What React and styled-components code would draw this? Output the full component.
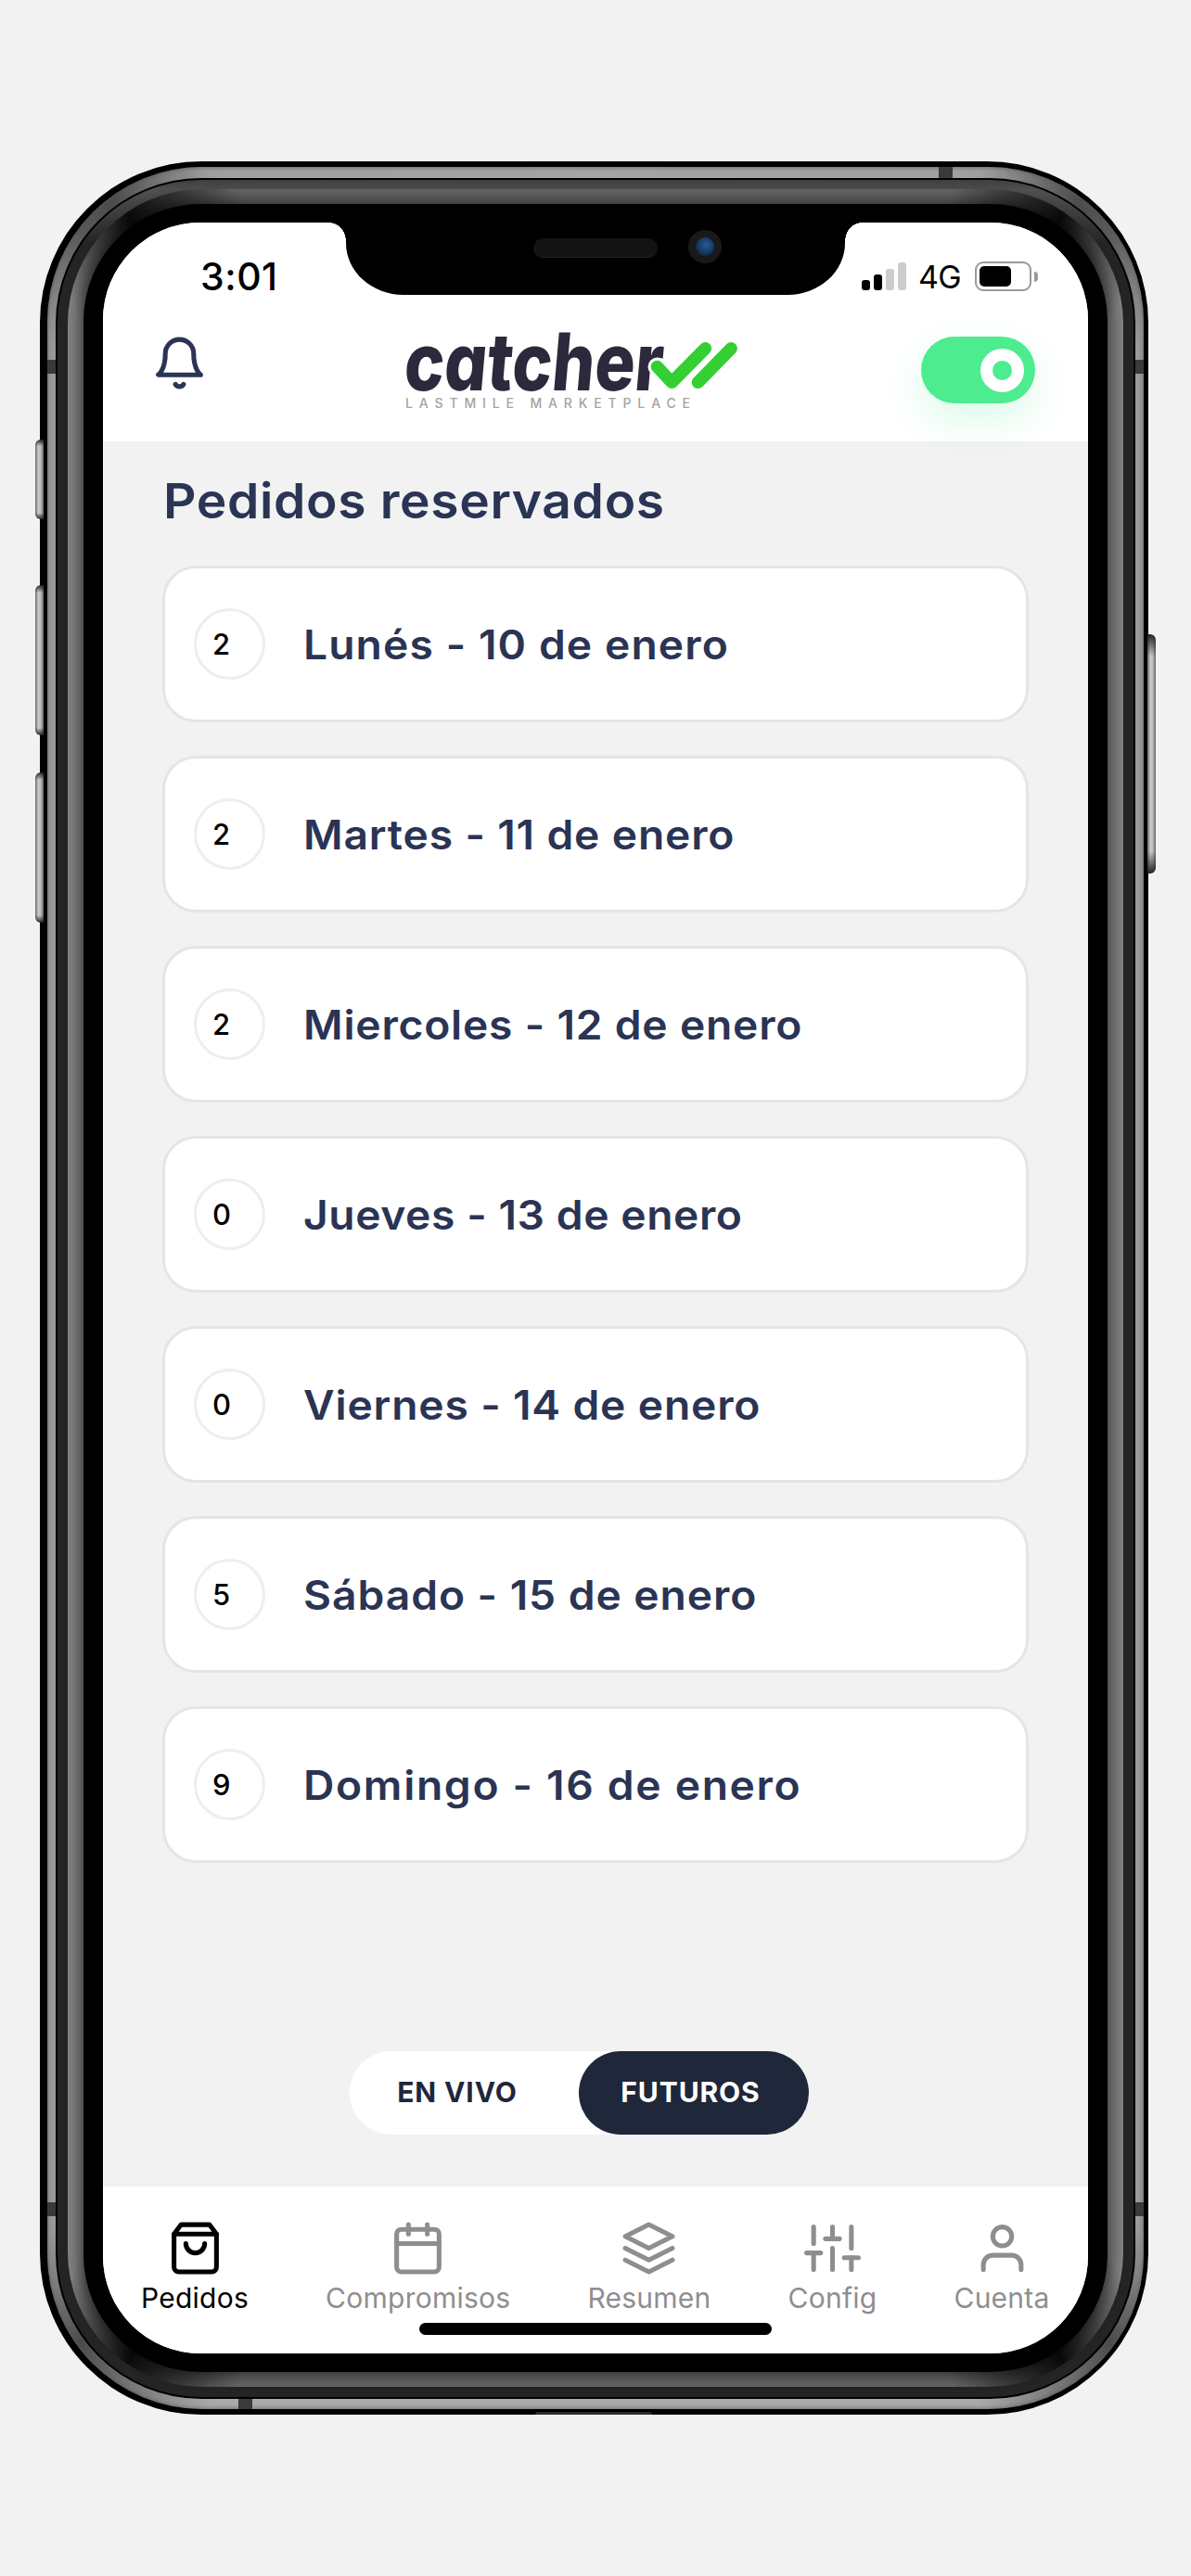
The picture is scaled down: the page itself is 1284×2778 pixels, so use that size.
import React from 'react';

import styled, { createGlobalStyle } from 'styled-components';
import { FiBell, FiCalendar, FiLayers, FiShoppingBag, FiSliders, FiUser } from 'react-icons/fi';

const GlobalStyle = createGlobalStyle`
    * {
        box-sizing: border-box;
    }
    body {
        margin: 0;
        background: #f2f2f2;
        font-family: Inter, 'Liberation Sans', sans-serif;
    }
`

const Page = styled.div`
    width: 1284px;
    height: 2778px;
    padding: 174px 46px 174px 43px;
    background: #f2f2f2;
`

/* phone chassis, from the outside in */
const Chassis = styled.div`
    position: relative;
    height: 2430px;
    padding: 6px 5px 6px 8px;
    border-radius: 174px;
    background: #000;
`
const MetalRing = styled.div`
    height: 100%;
    padding: 11.5px 9px;
    border-radius: 167px;
    background: conic-gradient(#a5a4a6 0deg, #a09fa1 19deg, #4e4b4d 24deg, #5b595b 26deg, #9c9a9d 30deg, #9c9a9d 150deg, #4e4b4d 154deg, #777577 157deg, #aaa8ab 161deg, #aaa8ab 199deg, #777577 203deg, #4e4b4d 206deg, #9c9a9d 210deg, #9c9a9d 330deg, #5b595b 334deg, #4e4b4d 336deg, #a09fa1 341deg, #a5a4a6 360deg);
    box-shadow: inset 0 0 5px #555;
`
const Seam = styled.div`
    height: 100%;
    padding: 2px;
    border-radius: 157px;
    background: #000;
`
const DarkRing = styled.div`
    height: 100%;
    padding: 10.5px 11px;
    border-radius: 155px;
    background: linear-gradient(#404040 0, #515151 11px, #252525 70px, #252525 100%);
`
const GreyRing = styled.div`
    height: 100%;
    padding: 16px 17px;
    border-radius: 145px;
    background: conic-gradient(#6a6a6a 0deg, #6a6a6a 18deg, #0c0c0c 23.5deg, #868686 28deg, #868686 152deg, #0c0c0c 156.5deg, #6a6a6a 162deg, #6a6a6a 198deg, #0c0c0c 203.5deg, #868686 208deg, #868686 332deg, #0c0c0c 336.5deg, #6a6a6a 342deg, #6a6a6a 360deg);
`
const Bezel = styled.div`
    height: 100%;
    padding: 20px 21px;
    border-radius: 126px;
    background: #000;
    box-shadow: 0 0 22px rgba(0, 0, 0, .8);
`
const SideButton = styled.span`
    position: absolute;
    top: ${props => props.top}px;
    ${props => props.side}: ${props => props.side === 'left' ? -5 : -7.5}px;
    width: 9px;
    height: ${props => props.length}px;
    border-radius: ${props => props.side === 'left' ? '6px 0 0 6px' : '0 6px 6px 0'};
    background:
        linear-gradient(#222, transparent ${props => props.fade}px, transparent calc(100% - ${props => props.fade}px), #222),
        linear-gradient(to right, #666, #ccc 35%, #bbb 65%, #666);
`
const Antenna = styled.span`
    position: absolute;
    top: ${props => props.top}px;
    left: ${props => props.left}px;
    width: ${props => props.flat ? 15 : 9}px;
    height: ${props => props.flat ? 11.5 : 15}px;
    background: #3a3a3a;
`
const Port = styled.span`
    position: absolute;
    bottom: 0;
    left: 534px;
    width: 126px;
    height: 3px;
    border-radius: 6px 6px 0 0;
    background: #2c2c2c;
`

const Screen = styled.div`
    position: relative;
    display: flex;
    flex-direction: column;
    height: 100%;
    border-radius: 105px;
    overflow: hidden;
    background: #f2f2f2;
`

const Notch = styled.div`
    position: absolute;
    top: 0;
    left: 262px;
    width: 538px;
    height: 78px;
    border-radius: 0 0 62px 62px / 0 0 56px 56px;
    background: #000;
    &::before, &::after {
        content: '';
        position: absolute;
        top: 0;
        width: 18px;
        height: 20px;
    }
    &::before {
        right: 100%;
        background: radial-gradient(ellipse 18px 20px at 0 100%, transparent 98%, #000 100%);
    }
    &::after {
        left: 100%;
        background: radial-gradient(ellipse 18px 20px at 100% 100%, transparent 98%, #000 100%);
    }
`
const Speaker = styled.span`
    position: absolute;
    top: 17px;
    left: 202px;
    width: 134px;
    height: 21px;
    border-radius: 11px;
    background: #131313;
    border-bottom: 1px solid #222;
`
const Camera = styled.span`
    position: absolute;
    top: 8px;
    left: 369px;
    width: 36px;
    height: 36px;
    border-radius: 50%;
    border: 8px solid #191919;
    background: radial-gradient(circle at 55% 40%, #28599a, #153a66 50%, #0a1626);
`

const Header = styled.header`
    position: relative;
    height: 236px;
    background: #fff;
`
const StatusBar = styled.div`
    display: flex;
    align-items: center;
    height: 116px;
    padding: 0 54px 0 105px;
`
const Time = styled.span`
    margin-right: auto;
    font-size: 41px;
    font-weight: 500;
    letter-spacing: .5px;
`
const Signal = styled.div`
    display: flex;
    align-items: flex-end;
    gap: 4px;
    height: 30px;
`
const SignalBar = styled.span`
    width: 9px;
    height: ${props => props.size}px;
    border-radius: 3px;
    background: ${props => props.on ? '#000' : '#ccc'};
`
const Network = styled.span`
    margin: 0 15px 0 13px;
    font-size: 34px;
    letter-spacing: -.7px;
`
const Battery = styled.span`
    width: 61px;
    height: 32px;
    padding: 3px;
    border: 2px solid #999;
    border-radius: 9px;
`
const BatteryLevel = styled.span`
    display: block;
    width: 34px;
    height: 22px;
    border-radius: 5px;
    background: #000;
`
const BatteryTip = styled.span`
    width: 4px;
    height: 11px;
    margin-left: 3px;
    border-radius: 0 4px 4px 0;
    background: #999;
`

const NavBar = styled.div`
    display: flex;
    align-items: flex-start;
    padding: 5px 57px 0 52px;
    svg {
        flex: none;
    }
`
const Logo = styled.svg`
    width: 380px;
    height: 100px;
    margin: -11px 0 0 206px;
    overflow: visible;
`
const Wordmark = styled.text`
    font-size: 86px;
    font-weight: 800;
    font-feature-settings: 'cv11';
    fill: #2b293b;
`
const Tagline = styled.text`
    font-size: 14px;
    font-weight: 500;
    fill: #a3a3a3;
`
const Toggle = styled.div`
    display: flex;
    align-items: center;
    justify-content: flex-end;
    width: 123px;
    height: 72px;
    margin: 2px 0 0 auto;
    padding-right: 12.5px;
    border-radius: 36px;
    background: #4cec8f;
    box-shadow: 0 18px 44px rgba(76, 236, 143, .2);
`
const Knob = styled.span`
    width: 47px;
    height: 47px;
    border: 13px solid #fff;
    border-radius: 50%;
`

const Content = styled.main`
    display: flex;
    flex-direction: column;
    flex: 1;
    padding: 32px 64px 0;
`
const Title = styled.h1`
    margin: 0 0 38px 1px;
    color: #2a3454;
    font-size: 52.5px;
    font-weight: 600;
    line-height: 64px;
    letter-spacing: .6px;
    white-space: nowrap;
    transform: scaleX(1.05);
    transform-origin: left;
`
const DayList = styled.div`
    display: flex;
    flex-direction: column;
    gap: 36px;
`
const DayCard = styled.div`
    display: flex;
    align-items: center;
    height: 169px;
    padding: 0 31px;
    border: 3px solid #e5e5e5;
    border-radius: 36px;
    background: #fff;
`
const Count = styled.span`
    display: flex;
    align-items: center;
    width: 77px;
    height: 77px;
    padding-left: 17px;
    border: 3px solid #eee;
    border-radius: 50%;
    font-size: 31px;
    font-weight: 500;
`
const DayName = styled.span`
    margin-left: 41px;
    color: #2a3454;
    font-size: 44px;
    font-weight: 600;
    letter-spacing: ${props => props.spacing}px;
    white-space: nowrap;
    transform: scaleX(1.05);
    transform-origin: left;
`

const Segmented = styled.div`
    display: flex;
    width: 495px;
    height: 90px;
    margin: auto 0 56px 202px;
    border-radius: 45px;
    background: #fff;
`
const Segment = styled.button`
    flex: none;
    width: ${props => props.active ? 248 : 247}px;
    padding: 0 ${props => props.active ? 7 : 15}px 3px 0;
    border: 0;
    border-radius: 45px;
    background: ${props => props.active ? '#1f273a' : 'transparent'};
    color: ${props => props.active ? '#fff' : '#1f273a'};
    font: 700 30px Inter, 'Liberation Sans', sans-serif;
    letter-spacing: .9px;
`

const TabBar = styled.nav`
    position: relative;
    display: flex;
    gap: 83px;
    height: 180px;
    padding: 36px 0 0 41px;
    background: #fff;
`
const Tab = styled.div`
    display: flex;
    flex-direction: column;
    align-items: center;
    gap: 5px;
    color: ${props => props.active ? '#000' : '#8e8e90'};
`
const TabLabel = styled.span`
    font-size: 30px;
    line-height: 36px;
    letter-spacing: .25px;
    white-space: nowrap;
`
const HomeIndicator = styled.span`
    position: absolute;
    bottom: 20px;
    left: 341px;
    width: 380px;
    height: 13px;
    border-radius: 7px;
    background: #000;
`

const days = [
    { name: 'Lunés - 10 de enero', count: 2, spacing: 1.05 },
    { name: 'Martes - 11 de enero', count: 2, spacing: 0.8 },
    { name: 'Miercoles - 12 de enero', count: 2, spacing: 0.75 },
    { name: 'Jueves - 13 de enero', count: 0, spacing: 0.55 },
    { name: 'Viernes - 14 de enero', count: 0, spacing: 0.8 },
    { name: 'Sábado - 15 de enero', count: 5, spacing: 0.9 },
    { name: 'Domingo - 16 de enero', count: 9, spacing: 1.6 },
];

const tabs = [
    { label: 'Pedidos', Icon: FiShoppingBag, active: true },
    { label: 'Compromisos', Icon: FiCalendar },
    { label: 'Resumen', Icon: FiLayers },
    { label: 'Config', Icon: FiSliders },
    { label: 'Cuenta', Icon: FiUser },
];

const CatcherLogo = () => (
    <Logo viewBox="430 350 380 100">
        <Wordmark transform="translate(434 421) skewX(-5)" textLength="279" lengthAdjust="spacingAndGlyphs">
            catcher
        </Wordmark>
        <g fill="none" strokeLinecap="round" strokeLinejoin="round">
            <path d="M708.5 395.5L724.3 412.3L760.4 375.8" stroke="#fff" strokeWidth="20" />
            <path d="M708.5 395.5L724.3 412.3L760.4 375.8" stroke="#33cf33" strokeWidth="13.5" />
            <path d="M788.2 375.8L752.5 412.3" stroke="#33cf33" strokeWidth="13.5" />
        </g>
        <Tagline x="437" y="440" textLength="307">LASTMILE MARKETPLACE</Tagline>
    </Logo>
);

const App = () => (
    <Page>
        <GlobalStyle />
        <Chassis>
            <MetalRing>
                <Seam>
                    <DarkRing>
                        <GreyRing>
                            <Bezel>
                                <Screen>
                                    <Header>
                                        <StatusBar>
                                            <Time>3:01</Time>
                                            <Signal>
                                                <SignalBar size={11} on />
                                                <SignalBar size={17} on />
                                                <SignalBar size={23} />
                                                <SignalBar size={30} />
                                            </Signal>
                                            <Network>4G</Network>
                                            <Battery><BatteryLevel /></Battery>
                                            <BatteryTip />
                                        </StatusBar>
                                        <NavBar>
                                            <FiBell size={61} color="#2a3454" />
                                            <CatcherLogo />
                                            <Toggle><Knob /></Toggle>
                                        </NavBar>
                                    </Header>
                                    <Content>
                                        <Title>Pedidos reservados</Title>
                                        <DayList>
                                            {days.map(day => (
                                                <DayCard key={day.name}>
                                                    <Count>{day.count}</Count>
                                                    <DayName spacing={day.spacing}>{day.name}</DayName>
                                                </DayCard>
                                            ))}
                                        </DayList>
                                        <Segmented>
                                            <Segment>EN VIVO</Segment>
                                            <Segment active>FUTUROS</Segment>
                                        </Segmented>
                                    </Content>
                                    <TabBar>
                                        {tabs.map(({ label, Icon, active }) => (
                                            <Tab key={label} active={active}>
                                                <Icon size={61} />
                                                <TabLabel>{label}</TabLabel>
                                            </Tab>
                                        ))}
                                        <HomeIndicator />
                                    </TabBar>
                                    <Notch>
                                        <Speaker />
                                        <Camera />
                                    </Notch>
                                </Screen>
                            </Bezel>
                        </GreyRing>
                    </DarkRing>
                </Seam>
            </MetalRing>
            <Antenna flat top={6} left={969} />
            <Antenna flat top={2412.5} left={214} />
            <Antenna top={214} left={8} />
            <Antenna top={2201} left={8} />
            <Antenna top={214} left={1181} />
            <Antenna top={2201} left={1181} />
            <SideButton side="left" top={300} length={86} fade={7} />
            <SideButton side="left" top={457} length={162} fade={8} />
            <SideButton side="left" top={659} length={162} fade={8} />
            <SideButton side="right" top={510} length={258} fade={24} />
            <Port />
        </Chassis>
    </Page>
);

export default App;
